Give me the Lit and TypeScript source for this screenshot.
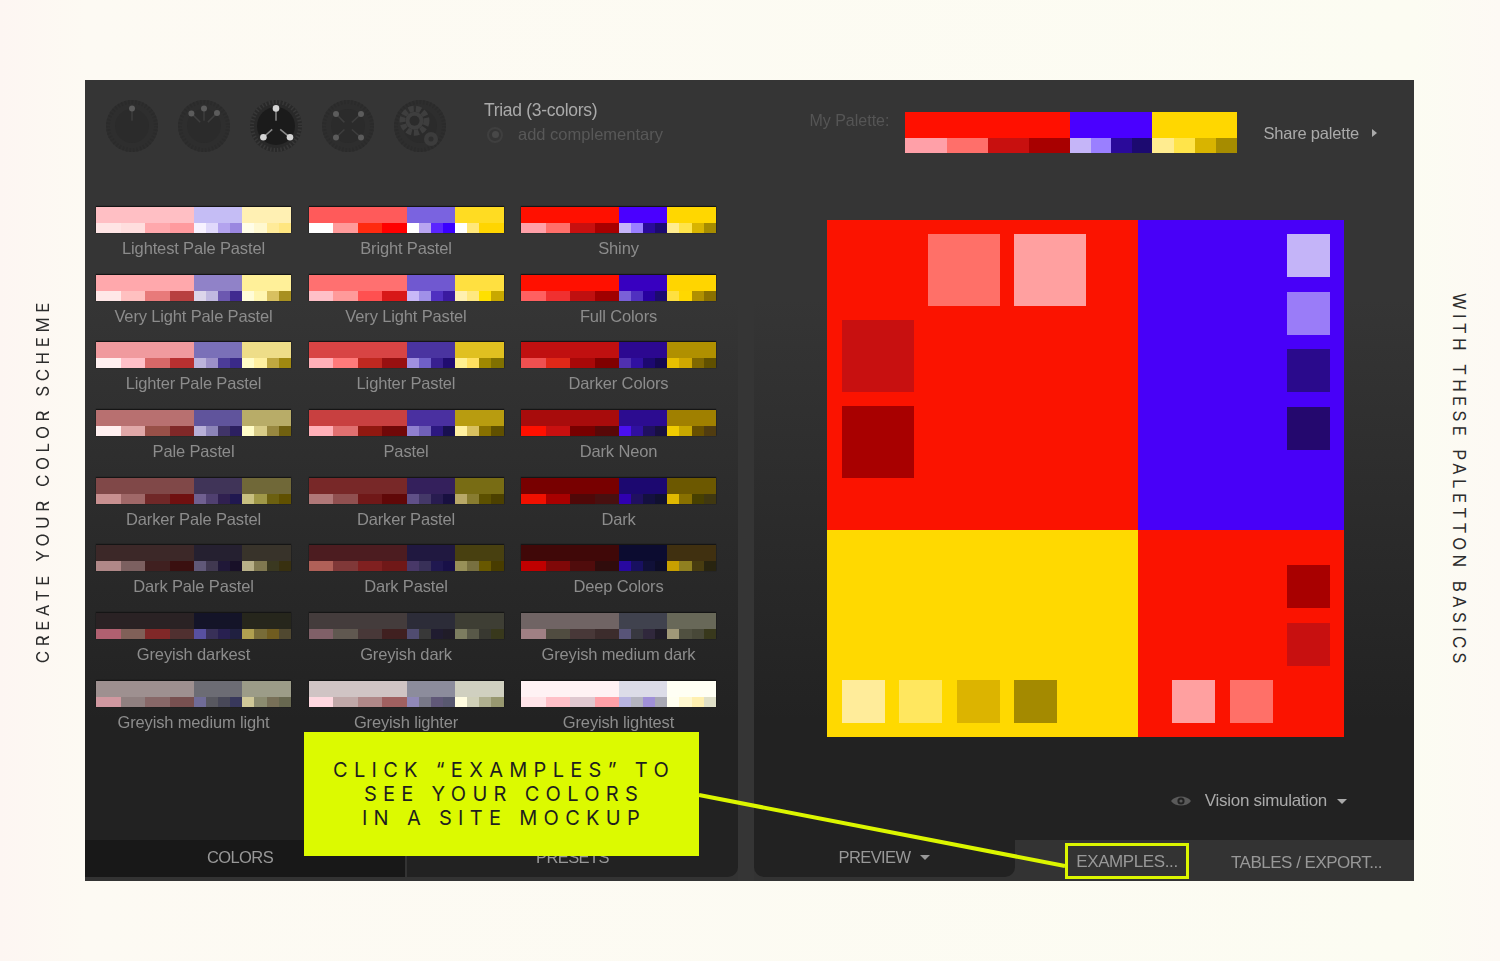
import { LitElement, html, css, svg } from "lit";
import { customElement } from "lit/decorators.js";

type P = [string, string, string, string, string[], string[], string[]];
const P: P[] = [
["Lightest Pale Pastel","#ffbfc4","#c5bdf5","#fff0b3",["#ffe5e5","#ffdede","#ffa8ac","#ff9a9e"],["#f7f2ff","#e0d9fb","#b3a3ee","#9a87e0"],["#fffde8","#fff8d0","#ffeb99","#ffe680"]],
["Bright Pastel","#ff5a5a","#7a63e0","#ffdc22",["#ffffff","#ff9a9a","#ff2a10","#ff0000"],["#ffffff","#b8a5f0","#5a25ff","#3a00ff"],["#ffffff","#ffe77a","#ffd500","#ffd500"]],
["Shiny","#ff1000","#4a00ff","#ffd700",["#ffa0a8","#ff6f6a","#c8100f","#a80000"],["#c5b5f8","#9a7fff","#2a0a9a","#1c0a70"],["#ffec90","#ffe44a","#d8b400","#a68c00"]],
["Very Light Pale Pastel","#ffa8ac","#9082c8","#fff099",["#ffe8e8","#ffc0c0","#e87a7a","#b84040"],["#dcd5ea","#c0b8e0","#6c58b0","#402a90"],["#fffcd8","#fff5b0","#d8c060","#a89020"]],
["Very Light Pastel","#ff7070","#7058d0","#ffe040",["#ffc0c8","#ff9a9a","#ff5050","#d81818"],["#c8b8f8","#a090e8","#5030c0","#3a1aa0"],["#fff0b0","#ffe880","#ffe000","#c8a800"]],
["Full Colors","#ff1000","#3800c0","#ffd500",["#ff6060","#f03030","#c01010","#a00000"],["#7a60d8","#5030c0","#2800a0","#1c0a70"],["#ffe040","#ffd800","#b09000","#8a7000"]],
["Lighter Pale Pastel","#f09a9e","#7a70b8","#eedd88",["#fff0f0","#ffc0c8","#d86868","#b83030"],["#bcb4dc","#9c90c8","#4c3c98","#3a2a88"],["#fffcc8","#fff0a0","#c0a840","#a08810"]],
["Lighter Pastel","#d84444","#4a34a0","#e0c020",["#ffb0b8","#ff7a7a","#c02820","#981010"],["#a090e0","#7060c8","#382090","#200c70"],["#fff090","#ffe060","#a08800","#807000"]],
["Darker Colors","#c01010","#2c0890","#b09000",["#f05050","#e02818","#a80808","#800000"],["#5030b0","#3010a0","#1c0870","#140850"],["#e8c000","#d0a800","#806800","#605000"]],
["Pale Pastel","#b87070","#60549c","#b8ac68",["#fff0f0","#e0a8a8","#985048","#802828"],["#b8b0d8","#8c84b8","#403468","#2c2060"],["#fffcc8","#d8cc88","#988840","#706010"]],
["Pastel","#c84040","#4a30a0","#b89c10",["#ffb0b8","#e07070","#901810","#700808"],["#9080d0","#7060b8","#2c1880","#181050"],["#fff0a0","#d8c060","#887000","#605000"]],
["Dark Neon","#a80c0c","#2c0c90","#a08000",["#ff1000","#c81010","#780000","#580808"],["#4a10f0","#3010a0","#201060","#181040"],["#f0cc00","#c8a800","#685000","#503c10"]],
["Darker Pale Pastel","#804848","#403458","#706838",["#c89090","#a06868","#702828","#701010"],["#706090","#504070","#302050","#201850"],["#c8c080","#a09848","#6c6010","#605000"]],
["Darker Pastel","#782828","#34205c","#786c14",["#b07878","#905050","#701818","#600808"],["#605088","#443868","#281c50","#181040"],["#b8a868","#887c30","#5c5000","#4c4000"]],
["Dark","#780000","#1c0870","#6c5800",["#f01000","#a80000","#500808","#481010"],["#3000b0","#201060","#141040","#101030"],["#e0b800","#887000","#484000","#403810"]],
["Dark Pale Pastel","#3c2828","#252030","#38332a",["#b08888","#7c6060","#402020","#3a1010"],["#605878","#403850","#201838","#181028"],["#b8b088","#807850","#3a3820","#383010"]],
["Dark Pastel","#4c1c20","#201840","#484010",["#b06058","#803838","#802020","#701818"],["#483868","#383058","#201850","#181048"],["#989058","#787040","#685800","#483c00"]],
["Deep Colors","#400808","#0c0c30","#403010",["#c00000","#800808","#500c0c","#300c0c"],["#2808a0","#181060","#101038","#0c0c28"],["#c8a000","#908020","#483c10","#282410"]],
["Greyish darkest","#2a2224","#141428","#26261c",["#b06070","#806058","#802828","#503030"],["#5850a0","#383058","#282050","#202040"],["#b0a050","#786c38","#705c20","#504830"]],
["Greyish dark","#443c3c","#2c2c38","#3e3e34",["#806068","#605850","#483838","#402020"],["#504c70","#383838","#201c30","#201c28"],["#7c7c60","#585848","#383830","#38381c"]],
["Greyish medium dark","#706464","#40424e","#686858",["#a08084","#504c40","#483838","#3c2c2c"],["#585478","#383840","#30283c","#201c28"],["#a09878","#505040","#484838","#38381c"]],
["Greyish medium light","#9e9090","#6c6c74","#9c9c88",["#d098a0","#908080","#886868","#785050"],["#706c98","#585860","#484858","#38385c"],["#d0c898","#8c8c70","#787058","#686850"]],
["Greyish lighter","#d0c4c4","#8c8c9c","#d0d0c0",["#ffd8e0","#c0a8a8","#b08888","#a06060"],["#9088b8","#787888","#605878","#585870"],["#fffce0","#d0d0b8","#b0b090","#989870"]],
["Greyish lightest","#fff2f4","#dcdce8","#fffff4",["#ffe4e8","#ffc0c8","#e0c8d0","#ffa0a8"],["#b8b4e0","#b4b4c0","#a090d8","#a8a8b4"],["#fffff0","#fff8d0","#fff0b0","#e0e0c8"]],
];

const PIP = (x: number, y: number, c: string, l: string, r: number) => svg`<line x1=${27 + x * 0.3} y1=${27 + y * 0.3} x2=${27 + x} y2=${27 + y} stroke=${l} stroke-width="1.5"/><circle cx=${27 + x} cy=${27 + y} r=${r} fill=${c}/>`;

const dial = (pips: [number, number][], on = false, gear = false) => html`<svg class="dial" width="54" height="54" viewBox="0 0 54 54">
  <circle cx="27" cy="27" r="26" fill=${on ? "#292929" : "#2e2e2e"}/>
  <circle cx="27" cy="27" r="24" fill="none" stroke=${on ? "#383838" : "#2b2b2b"} stroke-width="4" stroke-dasharray="1.5 2"/>
  <circle cx="27" cy="27" r=${on ? 19 : 17} fill=${on ? "#1b1b1b" : "#2b2b2b"}/>
  ${pips.map(([x, y]) => PIP(x, y, on ? "#d4d4d4" : "#5c5c5c", on ? "#8a8a8a" : "#3e3e3e", on ? 3.3 : 3))}
  ${gear ? svg`<circle cx="21.5" cy="21.7" r="12" fill="none" stroke="#3e3e3e" stroke-width="6" stroke-dasharray="5 2.2"/><circle cx="21.5" cy="21.7" r="9" fill="#3e3e3e"/><circle cx="21.5" cy="21.7" r="5" fill="#2b2b2b"/><circle cx="38" cy="40" r="7" fill="#3c3c3c"/><circle cx="38" cy="40" r="2.5" fill="#2e2e2e"/>` : ""}
</svg>`;

@customElement("app-root")
export class AppRoot extends LitElement {
  static styles = css`
    :host { display: block; width: 1500px; height: 961px; overflow: hidden; font-family: "Liberation Sans", Arial, sans-serif;
      background: linear-gradient(90deg, #fdf6f2 0, #fdfaf3 85px, #fcfcf2 1414px, #fdf9f4 100%); }
    .page { display: grid; grid-template-columns: 85px 1329px 86px; padding-top: 80px; height: 881px; box-sizing: border-box; }
    .side { display: flex; align-items: center; justify-content: center; }
    .side.r { padding-left: 3px; }
    .side span { writing-mode: vertical-rl; font-family: Inter, sans-serif; font-size: 17px; font-weight: 400; color: #2c2c2c; white-space: nowrap; }
    .side.l span { transform: rotate(180deg); letter-spacing: 4.5px; }
    .side.r span { letter-spacing: 4.25px; }
    .win { position: relative; height: 801px; background: #353535; display: flex; flex-direction: column; }
    .head { height: 120px; flex: none; display: flex; padding-left: 20px; color: #aaa; }
    .dials { display: flex; gap: 18px; padding-top: 19px; }
    .dial { filter: blur(.7px); flex: none; }
    .mode { margin-left: 37px; padding-top: 19px; }
    .mode .t { font-size: 17.5px; letter-spacing: -.3px; line-height: 22px; color: #aaa; filter: blur(.4px); }
    .mode .c { display: flex; align-items: center; margin-top: 4px; color: #585858; font-size: 16.5px; letter-spacing: 0; filter: blur(.4px); white-space: nowrap; }
    .radio { width: 16px; height: 16px; box-sizing: border-box; border: 2px solid #3f3f3f; border-radius: 50%; margin-right: 15px; margin-left: 3px; display: flex; align-items: center; justify-content: center; }
    .radio::after { content: ""; width: 7px; height: 7px; border-radius: 50%; background: #484848; }
    .mine { margin-left: auto; display: flex; align-items: flex-start; padding-right: 37px; padding-top: 31px; }
    .mine .lab { color: #555; font-size: 16px; letter-spacing: 0; margin-right: 16px; padding-top: 1px; filter: blur(.4px); white-space: nowrap; }
    .share { margin-left: 26px; color: #aaa; font-size: 16.5px; letter-spacing: -.2px; padding-top: 13px; filter: blur(.4px); display: flex; gap: 13px; align-items: flex-start; white-space: nowrap; }
    .share i { width: 0; height: 0; margin-top: 5px; border-left: 5px solid #aaa; border-top: 4px solid transparent; border-bottom: 4px solid transparent; }
    .body { flex: 1; display: flex; gap: 16px; min-height: 0; }
    .col { display: flex; flex-direction: column; background: linear-gradient(180deg, #353535 0, #353535 100px, #222 520px, #222 100%); }
    .left { width: 653px; flex: none; }
    .grid { flex: 1; display: grid; grid-template-columns: repeat(3, 195px); grid-auto-rows: 67.7px; column-gap: 17.5px; padding: 7px 0 0 11px; align-content: start; }
    .item { display: flex; flex-direction: column; align-items: center; }
    .sw { display: grid; grid-template-columns: 98fr 48fr 49fr; width: 195px; box-shadow: 0 -1px 1px #151515, 0 0 1px #151515; filter: blur(.35px); }
    .sw.big { grid-template-columns: 165fr 82fr 85fr; width: 332px; box-shadow: none; margin-top: 1px; }
    .g { display: flex; flex-direction: column; }
    .m { height: 16px; }
    .sm { display: flex; height: 10px; }
    .sm span { flex: 1; }
    .big .m { height: 26px; }
    .big .sm { height: 15px; }
    .name { margin-top: 6px; font-size: 16.5px; line-height: 19px; letter-spacing: -.15px; color: #8c8c8c; filter: blur(.45px); white-space: nowrap; }
    .tabs { height: 41px; flex: none; display: flex; background: #333; color: #989898; font-size: 16.5px; letter-spacing: -.6px; }
    .tab { display: flex; align-items: center; justify-content: center; height: 37px; box-sizing: border-box; padding-bottom: 3px; }
    .tab b, .ex b, .tb b { font-weight: 400; filter: blur(.45px); }
    .t1 { width: 320px; background: #181818; padding-right: 10px; }
    .t2 { width: 331px; margin-left: 2px; background: #222; border-bottom-right-radius: 10px; }
    .right { width: 660px; flex: none; }
    .stage { height: 591px; flex: none; padding: 20px 0 0 73px; box-sizing: border-box; }
    .pv { display: grid; grid-template-columns: 311px 206px; grid-template-rows: 310px 207px; width: 517px; }
    .q { box-sizing: border-box; display: grid; }
    .q1 { background: #fb1300; grid-template-columns: repeat(3, 72px); grid-template-rows: repeat(3, 72px); gap: 14px; padding: 14px 15px; }
    .q2 { background: #4800f8; grid-template-rows: repeat(4, 43px); row-gap: 14.6px; padding: 14px; justify-content: end; grid-template-columns: 43px; }
    .q3 { background: #ffd900; grid-template-columns: repeat(4, 43px); column-gap: 14.4px; padding: 14px 15px; align-content: end; grid-template-rows: 43px; }
    .q4 { background: #fb1300; grid-template-columns: repeat(3, 43px); grid-template-rows: repeat(3, 43px); gap: 14.5px; padding: 14px; justify-content: end; align-content: end; }
    .vrow { flex: 1; display: flex; justify-content: flex-end; align-items: flex-start; padding: 0 67px 0 0; color: #aaa; font-size: 17px; letter-spacing: -.3px; }
    .vrow .in { display: flex; align-items: center; height: 20px; filter: blur(.4px); white-space: nowrap; }
    .vrow svg { margin-right: 13px; }
    .caret { width: 0; height: 0; border-top: 5px solid currentColor; border-left: 5px solid transparent; border-right: 5px solid transparent; display: inline-block; margin-left: 10px; }
    .t3 { width: 261px; background: #222; border-bottom-left-radius: 10px; border-bottom-right-radius: 10px; }
    .ex { margin-left: 50px; width: 124px; height: 36px; margin-top: 3px; box-sizing: border-box; border: 3px solid #dcf600; padding-top: 2px; display: flex; align-items: center; justify-content: center; font-size: 17px; letter-spacing: -.4px; }
    .tb { margin-left: 42px; margin-top: 3px; height: 36px; padding-top: 4px; box-sizing: border-box; display: flex; align-items: center; font-size: 17px; letter-spacing: -.5px; white-space: nowrap; }
    .note { position: absolute; left: 219px; top: 652px; width: 395px; height: 124px; background: #dcfa00; color: #1e1e1e; font-family: Inter, sans-serif; font-size: 20px; line-height: 24px; letter-spacing: 6.3px; text-align: center; box-sizing: border-box; padding: 26px 0 0 5px; }
    .line { position: absolute; left: 0; top: 0; pointer-events: none; }
  `;

  private sw(p: P, big = false) {
    const cols = [[p[1], p[4]], [p[2], p[5]], [p[3], p[6]]] as [string, string[]][];
    return html`<div class="sw ${big ? "big" : ""}">${cols.map(([m, s]) => html`<div class="g"><div class="m" style="background:${m}"></div><div class="sm">${s.map((c) => html`<span style="background:${c}"></span>`)}</div></div>`)}</div>`;
  }

  render() {
    const mine = P[2];
    const sq = (c: string, col: number, row: number) => html`<div style="background:${c};grid-column:${col};grid-row:${row}"></div>`;
    return html`<div class="page">
      <div class="side l"><span>CREATE YOUR COLOR SCHEME</span></div>
      <div class="win">
        <div class="head">
          <div class="dials">
            ${dial([[0, -17.6]])}
            ${dial([[-12.6, -12.6], [0, -17.6], [13, -13]])}
            ${dial([[0, -17.6], [-12.6, 11.3], [14, 11.3]], true)}
            ${dial([[-12, -12], [13, -12], [-12, 11.5], [13, 11.5]])}
            ${dial([], false, true)}
          </div>
          <div class="mode">
            <div class="t">Triad (3-colors)</div>
            <div class="c"><span class="radio"></span>add complementary</div>
          </div>
          <div class="mine">
            <div class="lab">My Palette:</div>
            ${this.sw(mine, true)}
            <div class="share">Share palette <i></i></div>
          </div>
        </div>
        <div class="body">
          <div class="col left">
            <div class="grid">
              ${P.map((p) => html`<div class="item">${this.sw(p)}<div class="name">${p[0]}</div></div>`)}
            </div>
            <div class="tabs">
              <div class="tab t1"><b>COLORS</b></div>
              <div class="tab t2"><b>PRESETS</b></div>
            </div>
          </div>
          <div class="col right">
            <div class="stage">
              <div class="pv">
                <div class="q q1">
                  ${sq("#ff7068", 2, 1)}${sq("#ffa0a0", 3, 1)}${sq("#c81010", 1, 2)}${sq("#a80000", 1, 3)}
                </div>
                <div class="q q2">
                  ${sq("#c4b4f8", 1, 1)}${sq("#9a7cf8", 1, 2)}${sq("#2a0a8c", 1, 3)}${sq("#24086e", 1, 4)}
                </div>
                <div class="q q3">
                  ${sq("#ffec9a", 1, 1)}${sq("#ffe75f", 2, 1)}${sq("#dcb400", 3, 1)}${sq("#a48a00", 4, 1)}
                </div>
                <div class="q q4">
                  ${sq("#a80000", 3, 1)}${sq("#c81010", 3, 2)}${sq("#ffa0a0", 1, 3)}${sq("#ff7068", 2, 3)}
                </div>
              </div>
            </div>
            <div class="vrow"><div class="in">
              <svg width="22" height="14" viewBox="0 0 22 14"><path d="M1 7 C5 1 17 1 21 7 C17 13 5 13 1 7Z" fill="#5a5a5a"/><circle cx="11" cy="7" r="3.6" fill="#222"/><circle cx="11" cy="7" r="1.6" fill="#5a5a5a"/></svg>
              Vision simulation<span class="caret"></span>
            </div></div>
            <div class="tabs">
              <div class="tab t3"><b>PREVIEW</b><span class="caret"></span></div>
              <div class="ex"><b>EXAMPLES...</b></div>
              <div class="tb"><b>TABLES / EXPORT...</b></div>
            </div>
          </div>
        </div>
        <svg class="line" width="1329" height="801"><line x1="614" y1="715" x2="980" y2="786" stroke="#dcf600" stroke-width="4"/></svg>
        <div class="note">CLICK “EXAMPLES” TO<br>SEE YOUR COLORS<br>IN A SITE MOCKUP</div>
      </div>
      <div class="side r"><span>WITH THESE PALETTON BASICS</span></div>
    </div>`;
  }
}
